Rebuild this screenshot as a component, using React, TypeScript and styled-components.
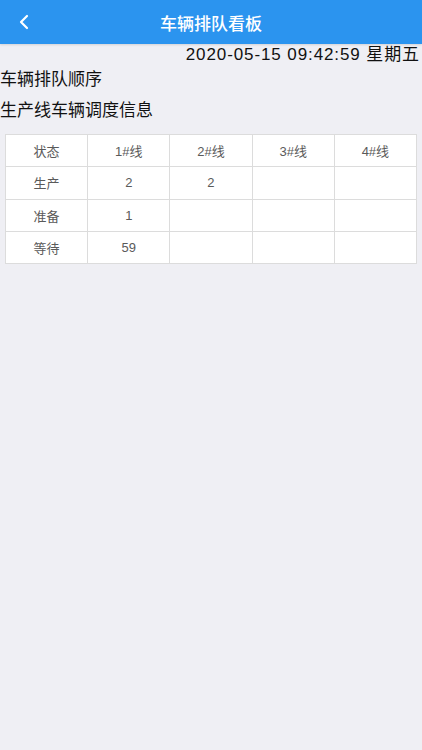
import { createGlobalStyle, styled } from "styled-components";

const GlobalStyle = createGlobalStyle`
  html, body {
    margin: 0;
    padding: 0;
    background-color: #efeff4;
  }
  body {
    font-family: "Noto Sans CJK SC", "Liberation Sans", sans-serif;
  }
`;

const Page = styled.div`
  min-height: 750px;
  background-color: #efeff4;
`;

const Header = styled.div`
  height: 44px;
  background-color: #2b94ef;
  display: flex;
  align-items: center;
  justify-content: center;
  position: relative;
  box-shadow: 0 1px 2px rgba(0, 0, 0, 0.12);
`;

const BackBtn = styled.button`
  position: absolute;
  left: 12px;
  top: 10px;
  width: 24px;
  height: 24px;
  padding: 0;
  border: none;
  background: none;
  display: flex;
  align-items: center;
  justify-content: center;
`;

const Title = styled.h1`
  margin: 0;
  color: #ffffff;
  font-size: 17px;
  font-weight: 500;
`;

const Clock = styled.div`
  text-align: right;
  padding-right: 2px;
  height: 18px;
  line-height: 22px;
  font-size: 17px;
  letter-spacing: 0.9px;
  color: #111;
  font-family: "Liberation Sans", "Noto Sans CJK SC", sans-serif;
`;

const Heading = styled.div`
  font-size: 17px;
  line-height: 31px;
  color: #111;
`;

const TableWrap = styled.div`
  padding: 10px 5px 0;
`;

const Table = styled.table`
  width: 100%;
  border-collapse: collapse;
  background-color: #ffffff;
  table-layout: fixed;
`;

const Cell = styled.td`
  border: 1.5px solid #dcdcdc;
  height: 31.25px;
  padding: 0;
  text-align: center;
  font-size: 13px;
  color: #5a5a5a;
  font-family: "Liberation Sans", "Noto Sans CJK SC", sans-serif;
`;

const lines = ["1#线", "2#线", "3#线", "4#线"];

const rows = [
  { status: "生产", values: ["2", "2", "", ""] },
  { status: "准备", values: ["1", "", "", ""] },
  { status: "等待", values: ["59", "", "", ""] },
];

function App() {
  return (
    <Page>
      <GlobalStyle />
      <Header>
        <BackBtn aria-label="返回">
          <svg width="12" height="16" viewBox="0 0 12 16">
            <path
              d="M9 2 L3 8 L9 14"
              fill="none"
              stroke="#ffffff"
              strokeWidth="2.2"
              strokeLinecap="round"
              strokeLinejoin="round"
            />
          </svg>
        </BackBtn>
        <Title>车辆排队看板</Title>
      </Header>
      <Clock>2020-05-15 09:42:59 星期五</Clock>
      <Heading>车辆排队顺序</Heading>
      <Heading>生产线车辆调度信息</Heading>
      <TableWrap>
        <Table>
          <tbody>
            <tr>
              <Cell>状态</Cell>
              {lines.map((l) => (
                <Cell key={l}>{l}</Cell>
              ))}
            </tr>
            {rows.map((r) => (
              <tr key={r.status}>
                <Cell>{r.status}</Cell>
                {r.values.map((v, i) => (
                  <Cell key={i}>{v}</Cell>
                ))}
              </tr>
            ))}
          </tbody>
        </Table>
      </TableWrap>
    </Page>
  );
}

export default App;
